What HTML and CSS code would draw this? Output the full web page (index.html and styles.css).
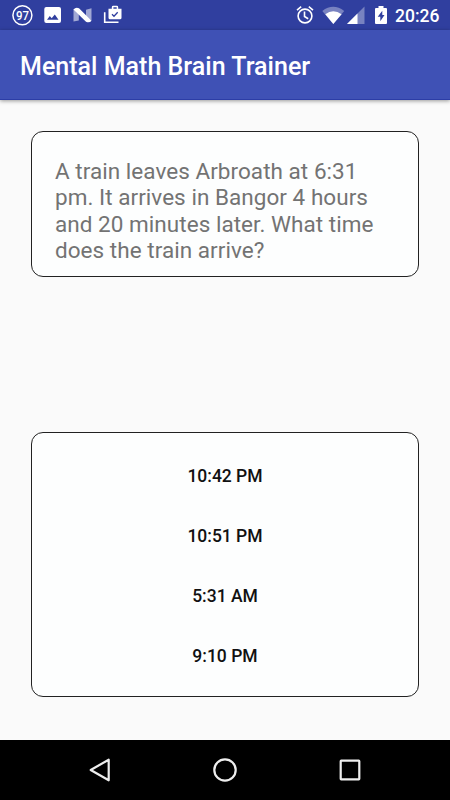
FILE: index.html
```html
<!DOCTYPE html>
<html lang="en">
<head>
    <meta charset="UTF-8">
    <meta name="viewport" content="width=device-width, initial-scale=1.0">
    <title>Mental Math Brain Trainer</title>
    <link rel="stylesheet" href="styles.css">
</head>
<body>
    <div class="status-bar">
        <svg class="status-icons" width="390" height="30" viewBox="0 0 390 30" fill="#fff">
            <!-- notification count -->
            <circle cx="22.4" cy="15.3" r="9.5" fill="none" stroke="#fff" stroke-width="1.5"/>
            <text class="count" x="22.5" y="19.900" text-anchor="middle" textLength="13" lengthAdjust="spacingAndGlyphs">97</text>
            <!-- picture -->
            <path fill-rule="evenodd" d="M46.300 7H59a2 2 0 0 1 2 2V21a2 2 0 0 1-2 2H46.300a2 2 0 0 1-2-2V9a2 2 0 0 1 2-2zM47 19.700H58.500L54.800 14.600 51.700 18.300 49.800 16z"/>
            <!-- android n -->
            <path opacity=".55" d="M73.500 9V21.500L78.800 20.500V13zM86 9.800L91.500 8.300V20.500L86 17z"/>
            <path d="M73.500 9.500Q75.500 7 79 8.200L91.500 20.700Q89.500 23.300 86 21.800L73.500 9.500z"/>
            <!-- work bag -->
            <path fill-rule="evenodd" d="M108.500 8.700H111.800V7.200Q111.800 5.800 113.200 5.800H116.800Q118.200 5.800 118.200 7.200V8.700H121.500V17.800Q121.500 19.300 120 19.300H110Q108.500 19.300 108.500 17.800zM113.400 7.300V8.700H116.700V7.300z"/>
            <path d="M104.700 12.300V22.300H118.500" fill="none" stroke="#fff" stroke-width="1.600"/>
            <path d="M112 14.300L114 16.300 117.700 12.300" fill="none" stroke="#303f9f" stroke-width="1.300"/>
            <!-- alarm -->
            <g fill="none" stroke="#fff" stroke-width="1.600">
                <circle cx="305" cy="16" r="6.900"/>
                <path d="M304.500 11.500V16.500L308.200 18.800M297 10.200L301.200 6.700M313 10.200L308.800 6.700"/>
            </g>
            <!-- wifi -->
            <path opacity=".35" d="M322.300 11Q333.200 2.600 344.200 11L333.300 24z"/>
            <path d="M325.300 14.200Q333.200 8.200 341.600 14.200L333.300 24z"/>
            <!-- signal -->
            <path opacity=".35" d="M347 24L364.500 6.500V24z"/>
            <path d="M347 24L357.500 13.500V24z"/>
            <!-- battery -->
            <path fill-rule="evenodd" d="M378.500 6H383.500V8H386Q387 8 387 9V23Q387 24 386 24H376Q375 24 375 23V9Q375 8 376 8H378.500zM382.300 10.800L377.700 16.800H380.300V21.300L384.500 15H382.300z"/>
        </svg>
        <span class="clock">20:26</span>
    </div>
    <header class="app-bar">
        <h1>Mental Math Brain Trainer</h1>
    </header>
    <main>
        <div class="card question">A train leaves Arbroath at 6:31<br>pm. It arrives in Bangor 4 hours<br>and 20 minutes later. What time<br>does the train arrive?</div>
        <div class="card answers">
            <button type="button">10:42 PM</button>
            <button type="button">10:51 PM</button>
            <button type="button">5:31 AM</button>
            <button type="button">9:10 PM</button>
        </div>
    </main>
    <nav class="nav-bar">
        <svg viewBox="0 0 30 30"><path d="M5.700 15L23.700 4.700V25.300z"/></svg>
        <svg viewBox="0 0 30 30"><circle cx="15" cy="15" r="10.700"/></svg>
        <svg viewBox="0 0 30 30"><rect x="5.700" y="5.700" width="18.600" height="18.600" rx=".5"/></svg>
    </nav>
</body>
</html>
```

FILE: styles.css
```css
* {
    box-sizing: border-box;
}
body {
    font-family: Roboto, sans-serif;
    margin: 0;
    height: 800px;
    display: flex;
    flex-direction: column;
    background-color: #fafafa;
    overflow: hidden;
}
.status-bar {
    display: flex;
    height: 30px;
    background-color: #303f9f;
    color: #fff;
}
.status-icons {
    flex: none;
}
.count {
    font-size: 13.5px;
    font-weight: 500;
}
.clock {
    margin-left: 5px;
    font-size: 17.5px;
    font-weight: 500;
    line-height: 32px;
}
.app-bar {
    display: flex;
    align-items: center;
    height: 70px;
    padding: 3px 20px 0;
    background-color: #3f51b5;
    color: #fff;
    border-bottom: 1px solid #2c3da6;
    box-shadow: 0 1px 4px rgba(0, 0, 0, 0.4);
}
h1 {
    margin: 0;
    font-size: 25px;
    font-weight: 500;
    letter-spacing: 0.02px;
    white-space: nowrap;
}
main {
    flex: 1;
    display: flex;
    flex-direction: column;
    justify-content: space-between;
    padding: 31px 31px 43px;
}
.card {
    border: 1px solid #222;
    border-radius: 12px;
    background-color: #fdfefe;
}
.question {
    height: 146px;
    padding: 26px 23px 0;
    font-size: 22.5px;
    line-height: 26.4px;
    letter-spacing: 0.04px;
    color: #737373;
    white-space: nowrap;
}
.answers {
    display: flex;
    flex-direction: column;
    height: 265px;
    padding: 13px 23px 0;
}
button {
    height: 60px;
    padding: 0;
    border: none;
    background: none;
    font-family: inherit;
    font-size: 17.5px;
    font-weight: 500;
    color: #111;
}
.nav-bar {
    display: flex;
    justify-content: center;
    align-items: center;
    gap: 95px;
    height: 60px;
    background-color: #000;
}
.nav-bar svg {
    width: 30px;
    height: 30px;
    fill: none;
    stroke: #eee;
    stroke-width: 2.2;
    stroke-linejoin: round;
}
```
